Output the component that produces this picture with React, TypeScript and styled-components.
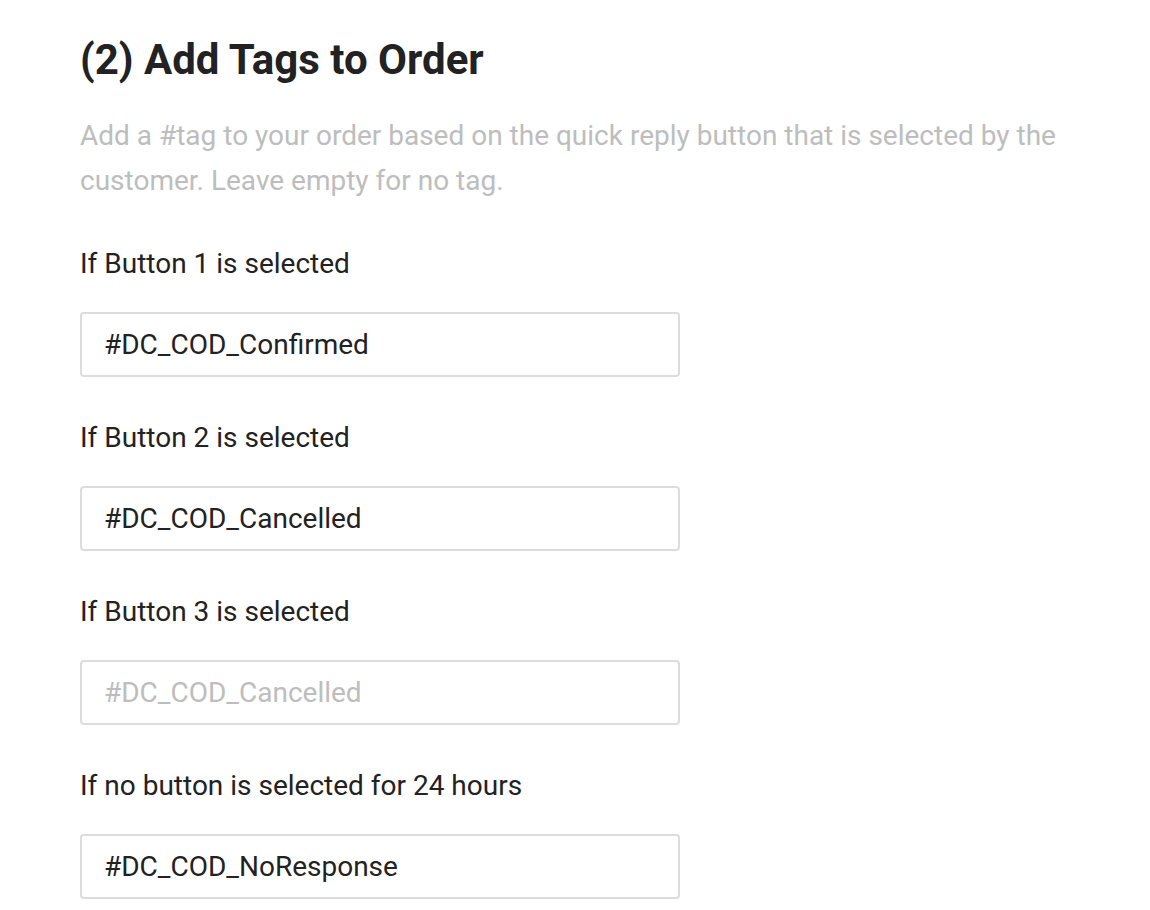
import React from "react";
import styled, { createGlobalStyle } from "styled-components";

const GlobalStyle = createGlobalStyle`
  html, body {
    margin: 0;
    padding: 0;
    background: #fff;
    font-family: Roboto, "Liberation Sans", sans-serif;
  }
`;

const Page = styled.div`
  padding: 30px 0 0 80px;
  width: 1000px;
`;

const Title = styled.h2`
  margin: 0;
  font-size: 42px;
  line-height: 60px;
  font-weight: 700;
  color: #222;
`;

const Description = styled.p`
  margin: 23px 0 0;
  font-size: 28px;
  line-height: 45px;
  color: #bdbdbd;
`;

const FieldList = styled.div`
  display: flex;
  flex-direction: column;
  gap: 42px;
  margin-top: 42px;
`;

const Field = styled.div`
  display: flex;
  flex-direction: column;
  gap: 29px;
`;

const Label = styled.label`
  font-size: 28px;
  line-height: 38px;
  color: #222;
`;

const Input = styled.input`
  box-sizing: border-box;
  width: 600px;
  height: 65px;
  padding: 0 22px;
  border: 2px solid #dcdcdc;
  border-radius: 4px;
  font-family: Roboto, "Liberation Sans", sans-serif;
  font-size: 28px;
  color: #222;
  outline: none;

  &::placeholder {
    color: #bdbdbd;
  }
`;

type TagField = {
  label: string;
  value?: string;
  placeholder?: string;
};

const fields: TagField[] = [
  { label: "If Button 1 is selected", value: "#DC_COD_Confirmed" },
  { label: "If Button 2 is selected", value: "#DC_COD_Cancelled" },
  { label: "If Button 3 is selected", placeholder: "#DC_COD_Cancelled" },
  { label: "If no button is selected for 24 hours", value: "#DC_COD_NoResponse" },
];

export default function App() {
  return (
    <>
      <GlobalStyle />
      <Page>
        <Title>(2) Add Tags to Order</Title>
        <Description>
          Add a #tag to your order based on the quick reply button that is
          selected by the customer. Leave empty for no tag.
        </Description>
        <FieldList>
          {fields.map((f) => (
            <Field key={f.label}>
              <Label>{f.label}</Label>
              <Input
                defaultValue={f.value}
                placeholder={f.placeholder}
                readOnly
              />
            </Field>
          ))}
        </FieldList>
      </Page>
    </>
  );
}
